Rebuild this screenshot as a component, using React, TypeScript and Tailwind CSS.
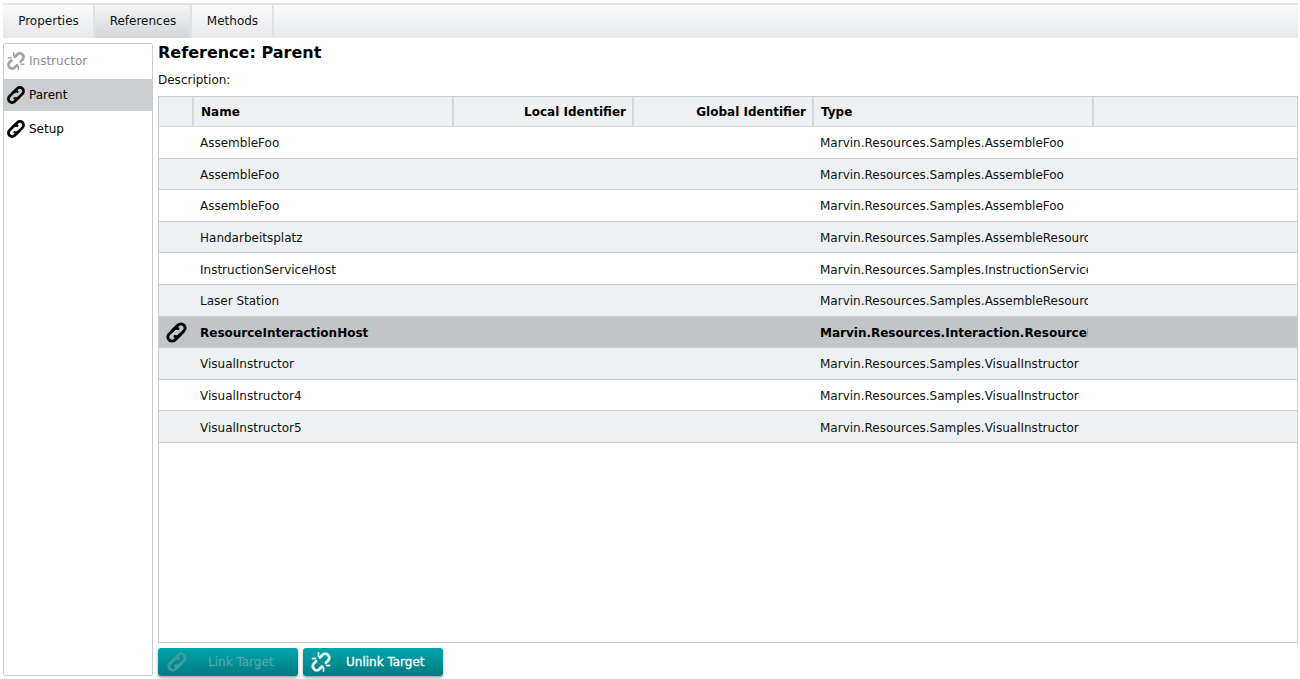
import React from "react";

const rows: { n: string; t: string; sel?: boolean }[] = [
  { n: "AssembleFoo", t: "Marvin.Resources.Samples.AssembleFoo" },
  { n: "AssembleFoo", t: "Marvin.Resources.Samples.AssembleFoo" },
  { n: "AssembleFoo", t: "Marvin.Resources.Samples.AssembleFoo" },
  { n: "Handarbeitsplatz", t: "Marvin.Resources.Samples.AssembleResource" },
  { n: "InstructionServiceHost", t: "Marvin.Resources.Samples.InstructionServiceHost" },
  { n: "Laser Station", t: "Marvin.Resources.Samples.AssembleResource" },
  { n: "ResourceInteractionHost", t: "Marvin.Resources.Interaction.ResourceInteractionHost", sel: true },
  { n: "VisualInstructor", t: "Marvin.Resources.Samples.VisualInstructor" },
  { n: "VisualInstructor4", t: "Marvin.Resources.Samples.VisualInstructor" },
  { n: "VisualInstructor5", t: "Marvin.Resources.Samples.VisualInstructor" },
];

function LinkIcon({ className }: { className: string }) {
  return (
    <svg viewBox="0 0 24 24" fill="none" stroke="currentColor" strokeWidth="2.9" strokeLinecap="round" className={className}>
      <g transform="rotate(-45 12 12)">
        <path d="M13.5 16H6a4 4 0 0 1 0-8h6a4 4 0 0 1 3.6 2.4" />
        <path d="M10.5 8H18a4 4 0 0 1 0 8h-6a4 4 0 0 1-3.6-2.4" />
      </g>
    </svg>
  );
}

function UnlinkIcon({ className }: { className: string }) {
  return (
    <svg viewBox="0 0 24 24" fill="none" stroke="currentColor" strokeWidth="2.9" strokeLinecap="round" className={className}>
      <g transform="rotate(-45 12 12)">
        <path d="M9.5 16H6a4 4 0 0 1 0-8h3" />
        <path d="M14.5 8H18a4 4 0 0 1 0 8h-3" />
      </g>
      <path strokeWidth="1.8" d="M9.5 3v3M3.5 8.5h3M14.5 21v-3M20.5 15.5h-3" />
    </svg>
  );
}

function Tab({ label, active, w }: { label: string; active?: boolean; w: string }) {
  return (
    <div
      className={`flex h-full items-center justify-center border-r-2 border-[#dfe1e3] pb-[1px] pl-[1px] ${w} ${
        active ? "bg-gradient-to-b from-[#f4f5f6] to-[#d3d6d9]" : ""
      }`}
    >
      {label}
    </div>
  );
}

function Side({ label, kind }: { label: string; kind: "off" | "sel" | "on" }) {
  return (
    <div
      className={`flex h-[32px] items-center gap-[2px] pl-[1px] ${
        kind === "sel" ? "bg-[#caced1] text-black" : kind === "off" ? "text-[#8c8c8c]" : "text-black"
      }`}
    >
      {kind === "off" ? (
        <UnlinkIcon className="h-[22px] w-[22px] text-[#a3a3a3]" />
      ) : (
        <LinkIcon className="h-[22px] w-[22px] text-black" />
      )}
      <span>{label}</span>
    </div>
  );
}

export default function App() {
  return (
    <div
      className="flex h-[679px] w-[1300px] flex-col overflow-hidden bg-white pl-[3px] pr-[2px] pt-[3px] text-[12px] text-[#111]"
      style={{ fontFamily: '"DejaVu Sans", Verdana, sans-serif' }}
    >
      <div className="flex h-[35px] shrink-0 border-t-2 border-[#e3e4e6] bg-gradient-to-b from-[#fafbfb] to-[#e6e8ea]">
        <Tab label="Properties" w="w-[92px]" />
        <Tab label="References" active w="w-[97px]" />
        <Tab label="Methods" w="w-[82px]" />
      </div>
      <div className="mt-[5px] flex min-h-0 flex-1 gap-[5px]">
        <div className="mb-[3px] flex w-[150px] shrink-0 flex-col rounded-[2px] border border-[#c9cccf] pt-[1px]">
          <Side label="Instructor" kind="off" />
          <div className="h-[2px]" />
          <Side label="Parent" kind="sel" />
          <div className="h-[2px]" />
          <Side label="Setup" kind="on" />
        </div>
        <div className="flex min-w-0 flex-1 flex-col">
          <div className="text-[16px] font-bold leading-[20px] text-black">Reference: Parent</div>
          <div className="mt-[9px] leading-[16px]">Description:</div>
          <div className="mt-[8px] flex h-[547px] flex-col overflow-hidden border border-[#c9cccf]">
            <div className="flex h-[30px] shrink-0 items-center border-b border-[#d5d8db] bg-[#eef1f4] font-bold text-black">
              <div className="h-full w-[35px] border-r-2 border-[#d5d8db]" />
              <div className="flex h-full w-[260px] items-center border-r-2 border-[#d5d8db] pl-[7px]">Name</div>
              <div className="flex h-full w-[180px] items-center justify-end border-r-2 border-[#d5d8db] pr-[6px]">Local Identifier</div>
              <div className="flex h-full w-[180px] items-center justify-end border-r-2 border-[#d5d8db] pr-[6px]">Global Identifier</div>
              <div className="flex h-full w-[280px] items-center border-r-2 border-[#d5d8db] pl-[7px]">Type</div>
            </div>
            {rows.map((r, i) => (
              <div
                key={i}
                className={`flex h-[31.6px] shrink-0 items-center border-b border-[#c9cccf] pt-[2px] ${
                  r.sel ? "bg-[#c2c6c9] font-bold text-black" : i % 2 ? "bg-[#eef1f4]" : "bg-white"
                }`}
              >
                <div className="flex h-[16px] w-[35px] items-center justify-center">
                  {r.sel && <LinkIcon className="h-[25px] w-[25px] shrink-0 text-black" />}
                </div>
                <div className="w-[626px] pl-[6px]">{r.n}</div>
                <div className="w-[268px] overflow-hidden whitespace-nowrap">{r.t}</div>
              </div>
            ))}
          </div>
          <div className="mt-[5px] flex gap-[5px]">
            <button className="flex h-[28px] w-[140px] items-center rounded-[3px] bg-gradient-to-b from-[#00a4ab] to-[#007b82] pl-[7px] text-[#4fa9ad] shadow-[0_2px_3px_rgba(0,0,0,0.35)] [-webkit-text-stroke:0.3px]">
              <LinkIcon className="h-[24px] w-[24px] text-[#3f9ca1]" />
              <span className="ml-[19px]">Link Target</span>
            </button>
            <button className="flex h-[28px] w-[140px] items-center rounded-[3px] bg-gradient-to-b from-[#00a4ab] to-[#007b82] pl-[6px] text-white shadow-[0_2px_3px_rgba(0,0,0,0.35)] [-webkit-text-stroke:0.3px]">
              <UnlinkIcon className="h-[24px] w-[24px] text-[#e6f5f5]" />
              <span className="ml-[13px]">Unlink Target</span>
            </button>
          </div>
        </div>
      </div>
    </div>
  );
}
